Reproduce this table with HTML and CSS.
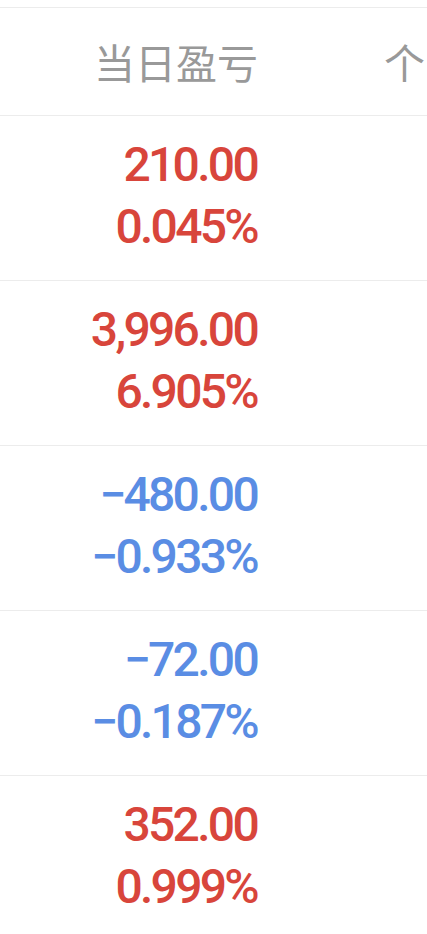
FILE: index.html
```html
<!DOCTYPE html>
<html lang="zh-CN">
<head>
    <meta charset="UTF-8">
    <meta name="viewport" content="width=device-width, initial-scale=1.0">
    <title>当日盈亏</title>
    <link rel="stylesheet" href="styles.css">
</head>
<body>
    <div class="table">
        <div class="head">
            <div class="col-pl">当日盈亏</div>
            <div class="col-next">个</div>
        </div>
        <div class="row up">
            <div class="amount">210.00</div>
            <div class="rate">0.045%</div>
        </div>
        <div class="row up">
            <div class="amount">3,996.00</div>
            <div class="rate">6.905%</div>
        </div>
        <div class="row down">
            <div class="amount">−480.00</div>
            <div class="rate">−0.933%</div>
        </div>
        <div class="row down">
            <div class="amount">−72.00</div>
            <div class="rate">−0.187%</div>
        </div>
        <div class="row up">
            <div class="amount">352.00</div>
            <div class="rate">0.999%</div>
        </div>
    </div>
</body>
</html>
```

FILE: styles.css
```css
body {
    margin: 0;
    background: #fff;
    overflow: hidden;
}
.table {
    margin-top: 7px;
    border-top: 1px solid #ececec;
}
.head {
    height: 107px;
    display: flex;
    align-items: center;
    border-bottom: 1px solid #ececec;
    font-family: "Noto Sans CJK SC", sans-serif;
    font-size: 41px;
    color: #999;
    white-space: nowrap;
}
.col-pl {
    width: 258px;
    flex: none;
    text-align: right;
    margin-top: -2px;
}
.col-next {
    margin-left: 126px;
    margin-top: -2px;
}
.row {
    height: 160px;
    padding: 0 170px 4px 0;
    display: flex;
    flex-direction: column;
    justify-content: center;
    align-items: flex-end;
    border-bottom: 1px solid #ececec;
    font-family: Roboto, sans-serif;
    font-size: 48px;
    font-weight: 500;
    line-height: 62px;
    letter-spacing: -2.7px;
}
.up {
    color: #d8453b;
}
.down {
    color: #5a8de4;
}
```
